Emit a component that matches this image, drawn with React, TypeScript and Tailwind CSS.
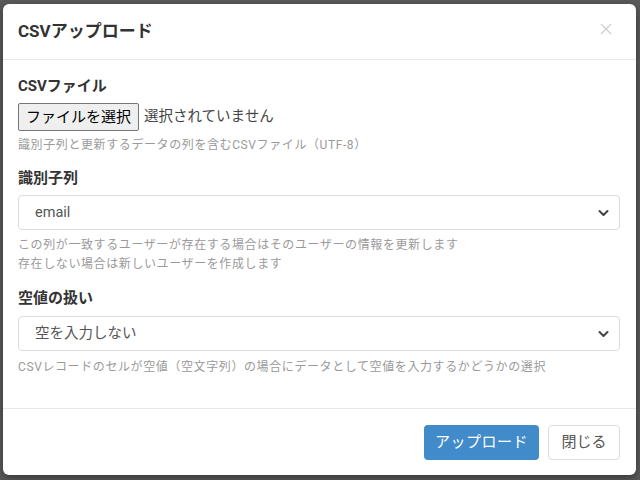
const font = "font-['Roboto','Noto_Sans_CJK_JP',sans-serif]";

function Chevron() {
  return (
    <svg width="11" height="8" viewBox="0 0 11 8" className="text-[#444]">
      <path d="M1.5 2 5.5 6l4-4" fill="none" stroke="currentColor" strokeWidth="2" strokeLinecap="round" strokeLinejoin="round" />
    </svg>
  );
}

function SelectBox({ value }: { value: string }) {
  return (
    <div className="flex h-[35px] items-center justify-between rounded-[4px] border border-[#dcdcdc] bg-white pl-[16px] pr-[10px]">
      <span className="text-[14.5px] text-[#555]">{value}</span>
      <Chevron />
    </div>
  );
}

function Help({ children }: { children: React.ReactNode }) {
  return <p className="text-[12px] leading-[19px] tracking-[0.6px] text-[#9a9a9a]">{children}</p>;
}

function Label({ children }: { children: React.ReactNode }) {
  return <p className="text-[15px] font-bold leading-[20px] text-[#333]">{children}</p>;
}

export default function App() {
  return (
    <div className={`h-[480px] w-[640px] bg-[#5a5a5a] pl-[3px] pt-[4px] ${font}`}>
      <div className="w-[633px] overflow-hidden rounded-[6px] bg-white shadow-[0_3px_9px_rgba(0,0,0,0.4)]">
        <div className="flex h-[56px] items-center justify-between border-b border-[#e8e8e8] pl-[15px] pr-[24px]">
          <h2 className="text-[17px] font-bold text-[#333]">CSVアップロード</h2>
          <svg width="12" height="12" viewBox="0 0 12 12" className="-mt-[5px] text-[#cfcfcf]">
            <path d="M1 1l10 10M11 1 1 11" stroke="currentColor" strokeWidth="1.3" />
          </svg>
        </div>

        <div className="pl-[15px] pr-[16px] pb-[31px] pt-[16px]">
          <Label>CSVファイル</Label>
          <div className="mt-[7px] flex items-center gap-[5px]">
            <span className="flex h-[28px] items-center rounded-[2px] border border-[#767676] bg-[#efefef] px-[7px] text-[15px] text-black">
              ファイルを選択
            </span>
            <span className="text-[14.5px] text-[#444]">選択されていません</span>
          </div>
          <div className="mt-[5px]">
            <Help>識別子列と更新するデータの列を含むCSVファイル（UTF-8）</Help>
          </div>

          <div className="mt-[13px]">
            <Label>識別子列</Label>
            <div className="mt-[7px]">
              <SelectBox value="email" />
            </div>
            <div className="mt-[6px]">
              <Help>この列が一致するユーザーが存在する場合はそのユーザーの情報を更新します</Help>
              <Help>存在しない場合は新しいユーザーを作成します</Help>
            </div>
          </div>

          <div className="mt-[14px]">
            <Label>空値の扱い</Label>
            <div className="mt-[8px]">
              <SelectBox value="空を入力しない" />
            </div>
            <div className="mt-[7px]">
              <Help>CSVレコードのセルが空値（空文字列）の場合にデータとして空値を入力するかどうかの選択</Help>
            </div>
          </div>
        </div>

        <div className="flex justify-end gap-[9px] border-t border-[#e8e8e8] pb-[15px] pr-[16px] pt-[16px]">
          <button className="h-[35px] w-[115px] rounded-[4px] bg-[#428bca] text-[15px] tracking-[0.5px] text-white">
            アップロード
          </button>
          <button className="h-[35px] w-[72px] rounded-[4px] border border-[#dddddd] bg-white text-[15px] text-[#555]">
            閉じる
          </button>
        </div>
      </div>
    </div>
  );
}
